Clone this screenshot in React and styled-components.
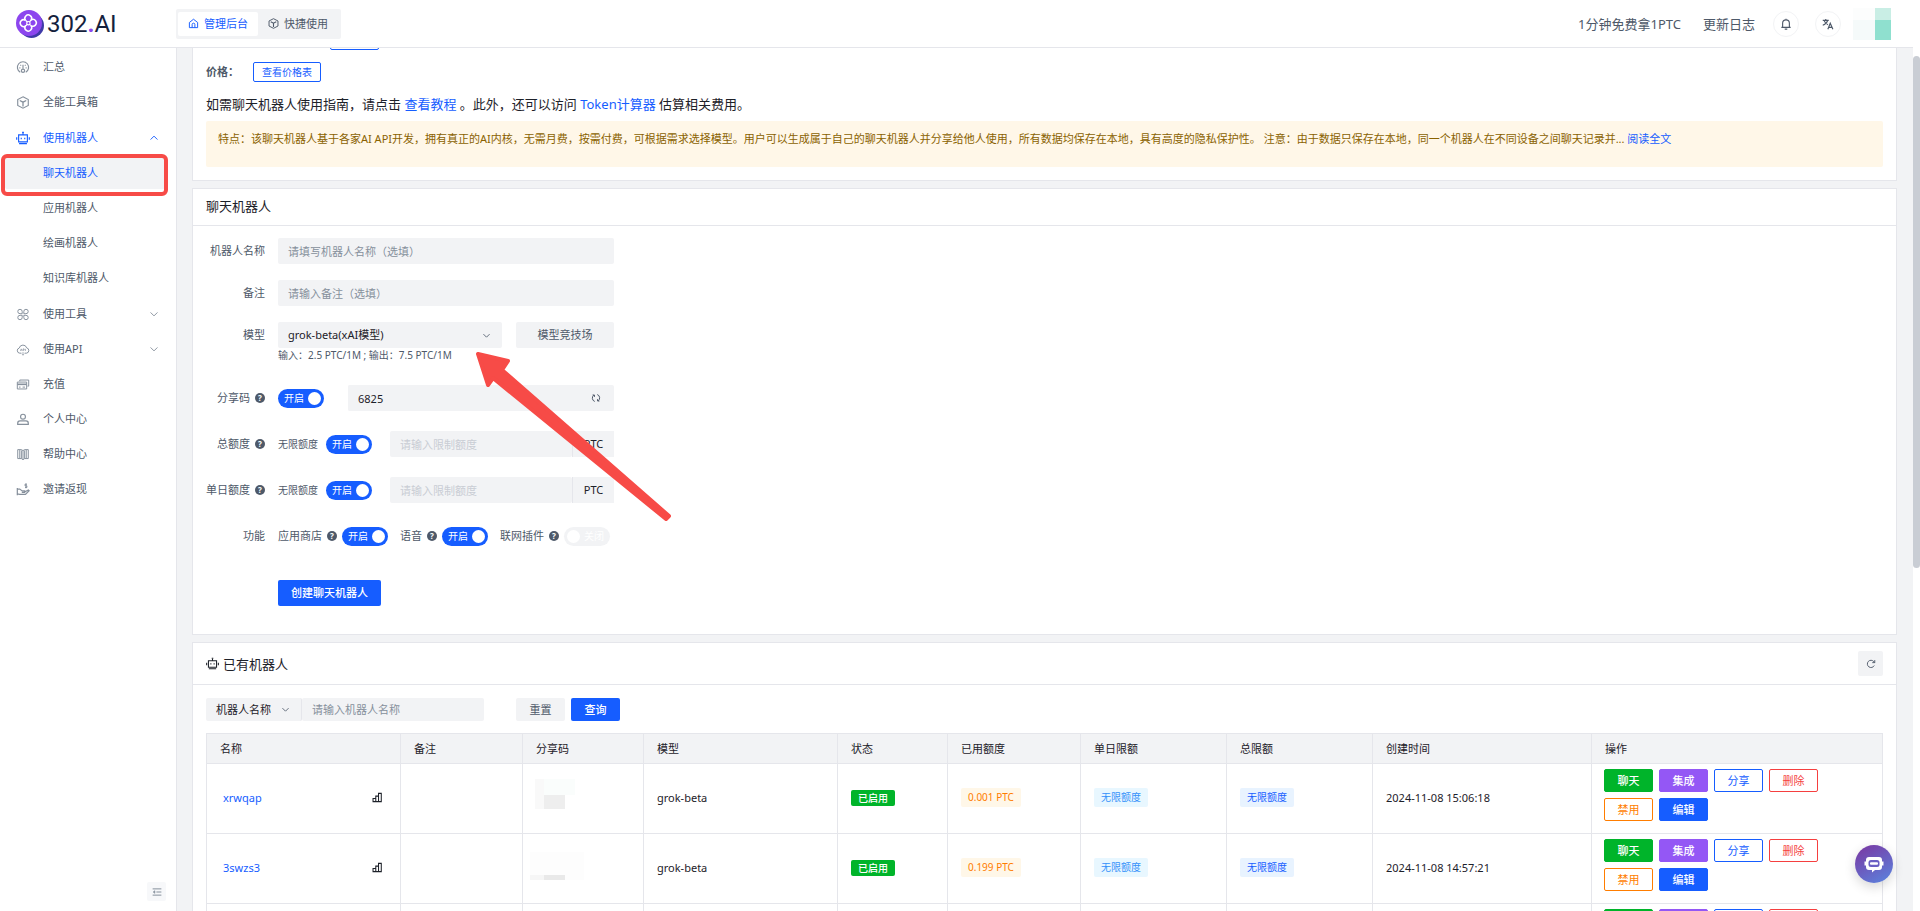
import { useState } from "react";
import styled, { createGlobalStyle } from "styled-components";

const menuTop = [
    { key: "summary", icon: "gauge", text: "汇总" },
    { key: "toolbox", icon: "cube", text: "全能工具箱" },
];

const robotMenu = ["聊天机器人", "应用机器人", "绘画机器人", "知识库机器人"];

const menuBottom = [
    { key: "tools", icon: "clover", text: "使用工具", arrow: true },
    { key: "api", icon: "cloud", text: "使用API", arrow: true },
    { key: "recharge", icon: "cards", text: "充值" },
    { key: "user", icon: "user", text: "个人中心" },
    { key: "help", icon: "book", text: "帮助中心" },
    { key: "invite", icon: "hand", text: "邀请返现" },
];

const columns = [
    { title: "名称", width: 194 },
    { title: "备注", width: 122 },
    { title: "分享码", width: 121 },
    { title: "模型", width: 194 },
    { title: "状态", width: 110 },
    { title: "已用额度", width: 133 },
    { title: "单日限额", width: 146 },
    { title: "总限额", width: 146 },
    { title: "创建时间", width: 219 },
    { title: "操作", width: 291 },
];

const robots = [
    { name: "xrwqap", mask: "a", model: "grok-beta", used: "0.001 PTC", time: "2024-11-08 15:06:18" },
    { name: "3swzs3", mask: "b", model: "grok-beta", used: "0.199 PTC", time: "2024-11-08 14:57:21" },
    { name: "", mask: "", model: "", used: "", time: "" },
];

const actions = [
    { text: "聊天", color: "#00b42a", fill: true },
    { text: "集成", color: "#9457f5", fill: true },
    { text: "分享", color: "#165dff" },
    { text: "删除", color: "#f53f3f" },
    { text: "禁用", color: "#ff7d00" },
    { text: "编辑", color: "#165dff", fill: true },
];

// 16x16 line icons
const paths = {
    gauge: (
        <>
            <path d="M4.6 13.8A6.9 6.9 0 1 1 11.4 13.8" strokeWidth="1.4" />
            <path d="M8 4.5v5M3.5 8.5h1.3M11.2 8.5h1.3M4.8 4.8l.9.9M11.2 4.8l-.9.9" strokeWidth="1.4" />
            <circle cx="8" cy="12" r="2" strokeWidth="1.5" />
        </>
    ),
    cube: (
        <>
            <path d="M8 1l6.5 3.3v7.4L8 15l-6.5-3.3V4.3z" strokeWidth="1.4" />
            <path d="M4 5.5l4 2.1 4-2.1M8 7.6V13" strokeWidth="1.6" />
        </>
    ),
    robot: (
        <>
            <path d="M3 4.5h10v8H3zM8 4.5V2M.8 7v3M15.2 7v3" strokeWidth="1.3" />
            <path d="M7 1.6h2M3.5 14.5h9M6 7.8v1.5M10 7.8v1.5" strokeWidth="1.3" />
        </>
    ),
    clover: (
        <>
            <path d="M7 7H4.4A2.7 2.7 0 1 1 7 4.4zM9 7V4.4A2.7 2.7 0 1 1 11.6 7z" />
            <path d="M7 9v2.6A2.7 2.7 0 1 1 4.4 9zM9 9h2.6A2.7 2.7 0 1 1 9 11.6z" />
        </>
    ),
    cloud: (
        <>
            <path d="M6 12.5H4A3.2 3.2 0 0 1 3.4 6.2 4.7 4.7 0 0 1 12.5 6 3.3 3.3 0 0 1 12.3 12.5H10" />
            <path d="M8 11v4M6.5 13.6L8 15l1.5-1.4M4.8 9.8l1-2.6 1 2.6M8 9.8V7.3h1.4v1.4H8M11 7.2v2.6" strokeWidth="0.8" />
        </>
    ),
    cards: (
        <>
            <path d="M4 4V2.5h11V10h-1.5" />
            <path d="M1 5h11.5v8.5H1zM3 11.2h2M7.5 11.2h3" />
            <path d="M1 7.8h11.5" strokeWidth="2" />
        </>
    ),
    user: (
        <>
            <circle cx="8" cy="4.6" r="3" strokeWidth="1.4" />
            <path d="M1.5 14v-1.4a2.8 2.8 0 0 1 2.8-2.8h7.4a2.8 2.8 0 0 1 2.8 2.8V14z" strokeWidth="1.5" />
        </>
    ),
    book: (
        <>
            <path d="M8 3.2L6 2H1.5v11H6l2 1.4 2-1.4h4.5V2H10z" />
            <path d="M4 2.5v10M6 3v10M8 3.2V14M10 3v10M12 2.5v10" />
        </>
    ),
    hand: (
        <>
            <path d="M1 6v9M1 7.5h3l3 2.2h3v1.8H6.5M10 11l4.5-2.5 1 1L11 14H4l-3-.5" strokeWidth="1.5" />
            <path d="M12.8 1.5H10.5v2h2.3v2h-2.3M11.7.5v6" />
        </>
    ),
    home: <path d="M2 6.5L8 1.8l6 4.7V14H2zM6 14V9.5a2 2 0 0 1 4 0V14" strokeWidth="1.4" />,
    down: <path d="M2.5 5.5L8 11l5.5-5.5" strokeWidth="1.5" />,
    up: <path d="M2.5 10.5L8 5l5.5 5.5" strokeWidth="1.5" />,
    bell: <path d="M1.8 12.5h12.4M3.5 12.5V7a4.5 4.5 0 0 1 9 0v5.5M8 2.5V1M6.3 14.8h3.4" strokeWidth="1.5" />,
    translate: (
        <>
            <path d="M1 3.2h8M5 1.2v2M2.8 3.5C4 6.5 5.8 8 8 9M7.5 3.5C6.5 6.5 4 8.7 1 9.7" strokeWidth="1.5" />
            <path d="M7.8 15l3.2-8 3.5 8M9 12.5h4.5" strokeWidth="1.6" />
        </>
    ),
    chart: <path d="M1.5 9.5h4V14h-4zM5.5 6h4v8h-4zM9.5 2h4v12h-4z" strokeWidth="1.5" />,
    refresh: <path d="M13.2 10.4A5.8 5.8 0 1 1 12.5 4.2L14 5.8M14 1.8v4h-4" strokeWidth="1.5" />,
    sync: <path d="M6 13.5A5.7 5.7 0 0 1 4.5 3.5M2.5 3.2h3v3M10 2.5a5.7 5.7 0 0 1 1.5 10M13.5 12.8h-3v-3" strokeWidth="1.6" />,
    fold: (
        <>
            <path d="M1 3h14M7 8h8M1 13h14" strokeWidth="1.6" />
            <path d="M4.5 6v4L2 8z" fill="currentColor" />
        </>
    ),
};

function Icon({ name, size = 13 }) {
    return (
        <IconSvg width={size} height={size} viewBox="0 0 16 16" aria-hidden="true">
            {paths[name]}
        </IconSvg>
    );
}

function Help() {
    return <HelpDot title="说明">?</HelpDot>;
}

function Switch({ label, on = true, disabled }) {
    const [checked, setChecked] = useState(on);
    return (
        <SwitchBox $on={checked}>
            <input
                type="checkbox"
                aria-label={label}
                checked={checked}
                disabled={disabled}
                onChange={(e) => setChecked(e.target.checked)}
            />
            <span>{checked ? "开启" : "关闭"}</span>
            <i />
        </SwitchBox>
    );
}

function Logo() {
    return (
        <LogoLink href="#">
            <svg width="28" height="28" viewBox="0 0 28 28" aria-hidden="true">
                <circle cx="15.5" cy="15.5" r="12.5" fill="#3f3aa8" />
                <circle cx="13" cy="13" r="13" fill="#8c46ee" />
                <g fill="none" stroke="#fff" strokeWidth="1.5">
                    <path d="M9.5 10.3A3.4 3.4 0 1 1 15.3 9.8A3.4 3.4 0 1 1 15 15.6A3.4 3.4 0 1 1 9.3 16.1A3.4 3.4 0 1 1 9.5 10.3Z" />
                    <path d="M9.5 10.3l2 1.8M15.3 9.8l-1.8 2M15 15.6l-1.5-1.2M9.3 16.1l2-1.7" strokeWidth="1.2" />
                    <circle cx="12.4" cy="13.2" r="1.7" strokeWidth="1.2" />
                </g>
            </svg>
            <span>302<b>.</b>AI</span>
        </LogoLink>
    );
}

function Sidebar() {
    const [active, setActive] = useState("聊天机器人");
    return (
        <Side>
            <nav>
                {menuTop.map((m) => (
                    <MenuItem href="#" key={m.key}>
                        <Icon name={m.icon} />
                        <span>{m.text}</span>
                    </MenuItem>
                ))}
                <MenuGroup>
                    <MenuItem href="#" $active>
                        <Icon name="robot" size={14} />
                        <span>使用机器人</span>
                        <Icon name="up" size={10} />
                    </MenuItem>
                    {robotMenu.map((text) => (
                        <SubItem href="#" key={text} $active={active === text} onClick={() => setActive(text)}>
                            {text}
                            {text === "聊天机器人" && <Marker />}
                        </SubItem>
                    ))}
                </MenuGroup>
                {menuBottom.map((m) => (
                    <MenuItem href="#" key={m.key}>
                        <Icon name={m.icon} />
                        <span>{m.text}</span>
                        {m.arrow && <Icon name="down" size={10} />}
                    </MenuItem>
                ))}
            </nav>
            <FoldBtn type="button" aria-label="收起菜单">
                <Icon name="fold" size={10} />
            </FoldBtn>
        </Side>
    );
}

function Intro() {
    return (
        <IntroCard>
            <IntroRow>
                <ClippedLink href="#" aria-label="教程" />
            </IntroRow>
            <IntroRow>
                <strong>价格：</strong>
                <OutlineLink href="#">查看价格表</OutlineLink>
            </IntroRow>
            <IntroText>
                如需聊天机器人使用指南，请点击 <a href="#">查看教程</a> 。此外，还可以访问 <a href="#">Token计算器</a> 估算相关费用。
            </IntroText>
            <Notice>
                特点：该聊天机器人基于各家AI API开发，拥有真正的AI内核，无需月费，按需付费，可根据需求选择模型。用户可以生成属于自己的聊天机器人并分享给他人使用，所有数据均保存在本地，具有高度的隐私保护性。 注意：由于数据只保存在本地，同一个机器人在不同设备之间聊天记录并... <a href="#">阅读全文</a>
            </Notice>
        </IntroCard>
    );
}

function QuotaRow({ id, label }) {
    return (
        <FormRow>
            <label htmlFor={id}>{label} <Help /></label>
            <Controls>
                <Small>无限额度</Small>
                <Switch label={label} />
                <Quota>
                    <Input id={id} placeholder="请输入限制额度" disabled />
                    <span>PTC</span>
                </Quota>
            </Controls>
        </FormRow>
    );
}

function CreateForm() {
    return (
        <Card>
            <CardHead>聊天机器人</CardHead>
            <Form onSubmit={(e) => e.preventDefault()}>
                <FormRow $gap={16}>
                    <label htmlFor="name">机器人名称</label>
                    <Input id="name" placeholder="请填写机器人名称（选填）" />
                </FormRow>
                <FormRow $gap={16}>
                    <label htmlFor="remark">备注</label>
                    <Input id="remark" placeholder="请输入备注（选填）" />
                </FormRow>
                <FormRow $gap={23}>
                    <label htmlFor="model">模型</label>
                    <div>
                        <ModelLine>
                            <SelectBox>
                                <select id="model">
                                    <option>grok-beta(xAI模型)</option>
                                </select>
                                <Icon name="down" size={9} />
                            </SelectBox>
                            <GreyBtn type="button">模型竞技场</GreyBtn>
                        </ModelLine>
                        <Hint>输入：2.5 PTC/1M ; 输出：7.5 PTC/1M</Hint>
                    </div>
                </FormRow>
                <FormRow>
                    <label htmlFor="code">分享码 <Help /></label>
                    <ShareLine>
                        <Switch label="分享码" />
                        <CodeBox>
                            <Input id="code" defaultValue="6825" />
                            <button type="button" aria-label="刷新分享码"><Icon name="sync" size={10} /></button>
                        </CodeBox>
                    </ShareLine>
                </FormRow>
                <QuotaRow id="total" label="总额度" />
                <QuotaRow id="daily" label="单日额度" />
                <FormRow $gap={31}>
                    <label>功能</label>
                    <Features>
                        <div>应用商店 <Help /><Switch label="应用商店" /></div>
                        <div>语音 <Help /><Switch label="语音" /></div>
                        <div>联网插件 <Help /><Switch label="联网插件" on={false} disabled /></div>
                    </Features>
                </FormRow>
                <FormRow $gap={0}>
                    <span />
                    <CreateBtn type="submit">创建聊天机器人</CreateBtn>
                </FormRow>
                <Arrow width="202" height="174" viewBox="0 0 202 174" aria-hidden="true">
                    <path d="M4 4L34 11L28 20L195 166L192 169L19 28L14 35Z" />
                </Arrow>
            </Form>
        </Card>
    );
}

function RobotList() {
    return (
        <ListCard>
            <ListHead>
                <Icon name="robot" />
                <span>已有机器人</span>
                <button type="button" aria-label="刷新"><Icon name="refresh" size={10} /></button>
            </ListHead>
            <ListBody>
                <Filter>
                    <SearchBox>
                        <FieldSelect>
                            <select aria-label="筛选字段">
                                <option>机器人名称</option>
                            </select>
                            <Icon name="down" size={9} />
                        </FieldSelect>
                        <Input aria-label="机器人名称" placeholder="请输入机器人名称" />
                    </SearchBox>
                    <FilterBtn type="button">重置</FilterBtn>
                    <FilterBtn type="button" $primary>查询</FilterBtn>
                </Filter>
                <Table>
                    <colgroup>
                        {columns.map((c) => <Col key={c.title} $w={c.width} />)}
                    </colgroup>
                    <thead>
                        <tr>{columns.map((c) => <th key={c.title}>{c.title}</th>)}</tr>
                    </thead>
                    <tbody>
                        {robots.map((r, i) => (
                            <tr key={i}>
                                <td>
                                    <NameCell>
                                        <a href="#">{r.name}</a>
                                        {r.name && <Icon name="chart" size={11} />}
                                    </NameCell>
                                </td>
                                <td />
                                <td>{r.mask && <Mask kind={r.mask} />}</td>
                                <td>{r.model}</td>
                                <td>{r.name && <Status>已启用</Status>}</td>
                                <td>{r.used && <Tag $bg="#fff7e8" $color="#ff7d00">{r.used}</Tag>}</td>
                                <td>{r.name && <Tag $bg="#e8f7ff" $color="#3491fa">无限额度</Tag>}</td>
                                <td>{r.name && <Tag $bg="#e8f3ff" $color="#165dff">无限额度</Tag>}</td>
                                <td>{r.time}</td>
                                <ActionCell>
                                    <Actions>
                                        {actions.map((a) => (
                                            <ActionBtn type="button" key={a.text} $color={a.color} $fill={a.fill}>{a.text}</ActionBtn>
                                        ))}
                                    </Actions>
                                </ActionCell>
                            </tr>
                        ))}
                    </tbody>
                </Table>
            </ListBody>
        </ListCard>
    );
}

// pixelated share codes
function Mask({ kind }) {
    if (kind === "a") {
        return (
            <MaskSvg width="40" height="30" aria-hidden="true">
                <rect width="9" height="30" fill="#f9f9f9" />
                <rect x="9" width="31" height="16" fill="#fafdfc" />
                <rect x="9" y="16" width="21" height="14" fill="#eeeeee" />
            </MaskSvg>
        );
    }
    return (
        <MaskSvg $wide width="54" height="28" aria-hidden="true">
            <rect width="54" height="28" fill="#fdfdfd" />
            <rect y="23" width="14" height="5" fill="#f6f6f6" />
            <rect x="14" y="23" width="21" height="5" fill="#e9e9e9" />
        </MaskSvg>
    );
}

export default function App() {
    return (
        <Page>
            <GlobalStyle />
            <Shell>
                <Header>
                    <Logo />
                    <Tabs>
                        <Tab type="button" $active><Icon name="home" size={11} />管理后台</Tab>
                        <Tab type="button"><Icon name="cube" size={11} />快捷使用</Tab>
                    </Tabs>
                    <HeaderRight>
                        <a href="#">1分钟免费拿1PTC</a>
                        <a href="#">更新日志</a>
                        <RoundBtn type="button" aria-label="通知"><Icon name="bell" size={12} /></RoundBtn>
                        <RoundBtn type="button" aria-label="切换语言"><Icon name="translate" size={12} /></RoundBtn>
                        <svg width="38" height="32" aria-hidden="true">
                            <rect width="22" height="12" fill="#fcfdfd" />
                            <rect y="12" width="22" height="20" fill="#f5fafa" />
                            <rect x="22" width="16" height="12" fill="#c9eee5" />
                            <rect x="22" y="12" width="16" height="20" fill="#8fe0cf" />
                        </svg>
                    </HeaderRight>
                </Header>
                <Body>
                    <Sidebar />
                    <Main>
                        <Intro />
                        <CreateForm />
                        <RobotList />
                    </Main>
                </Body>
            </Shell>
            <Rail><div /></Rail>
            <ChatBall type="button" aria-label="在线客服">
                <svg width="20" height="20" viewBox="0 0 20 20" aria-hidden="true">
                    <path d="M5 3h10a3 3 0 0 1 3 3v1.5h1.5v4H18V13a3 3 0 0 1-3 3h-4l-3 2.5V16H5a3 3 0 0 1-3-3v-1.5H.5v-4H2V6a3 3 0 0 1 3-3z" fill="#fff" />
                    <rect x="4.5" y="6" width="11" height="7" rx="2.5" fill="#6a5fc4" />
                    <rect x="6" y="8.2" width="8" height="2.6" rx="1" fill="#fff" />
                </svg>
            </ChatBall>
        </Page>
    );
}

const GlobalStyle = createGlobalStyle`
* {
    box-sizing: border-box;
}
body {
    margin: 0;
    background: #fff;
}
body, button, input, select {
    font-family: "Noto Sans", "Noto Sans CJK SC", sans-serif;
    font-size: 11px;
    line-height: 16px;
    color: #1d2129;
}
button, input, select {
    border: none;
    outline: none;
    padding: 0;
    margin: 0;
    border-radius: 2px;
    background: transparent;
}
button {
    cursor: pointer;
}
a {
    color: #165dff;
    text-decoration: none;
}
`;

const IconSvg = styled.svg`
    fill: none;
    stroke: currentColor;
    stroke-width: 1.2;
    flex-shrink: 0;
`;

const Page = styled.div`
    display: flex;
    height: 100vh;
    overflow: hidden;
`;

const Shell = styled.div`
    flex: 1;
    min-width: 0;
    display: flex;
    flex-direction: column;
`;

const Rail = styled.div`
    width: 7px;
    padding-top: 56px;

    div {
        height: 60%;
        max-height: 512px;
        border-radius: 4px;
        background: #c9cdd4;
    }
`;

const Header = styled.header`
    display: flex;
    align-items: center;
    height: 48px;
    flex-shrink: 0;
    padding: 0 22px 0 16px;
    border-bottom: 1px solid #e5e6eb;
`;

const LogoLink = styled.a`
    display: flex;
    align-items: center;
    gap: 3px;
    width: 160px;
    color: #14213d;
    font-family: Roboto, sans-serif;
    font-size: 24px;
    line-height: 28px;

    b {
        color: #8c46ee;
    }
`;

const Tabs = styled.div`
    display: flex;
    padding: 3px 3px 3px 2px;
    border-radius: 2px;
    background: #f2f3f5;
`;

const Tab = styled.button`
    display: flex;
    align-items: center;
    gap: 5px;
    height: 24px;
    padding: 0 10px;
    color: ${(p) => (p.$active ? "#165dff" : "#4e5969")};
    background: ${(p) => (p.$active ? "#fff" : "transparent")};
`;

const HeaderRight = styled.div`
    display: flex;
    align-items: center;
    margin-left: auto;

    a {
        margin-right: 22px;
        font-size: 13px;
        line-height: 20px;
        color: #4e5969;
    }
    a + button {
        margin-left: -4px;
    }
`;

const RoundBtn = styled.button`
    display: flex;
    align-items: center;
    justify-content: center;
    width: 26px;
    height: 26px;
    margin-right: 16px;
    border: 1px solid #f2f3f5;
    border-radius: 50%;
    color: #4e5969;

    & + & {
        margin-right: 12px;
    }
`;

const Body = styled.div`
    display: flex;
    flex: 1;
    min-height: 0;
`;

const Side = styled.aside`
    display: flex;
    flex-direction: column;
    justify-content: space-between;
    width: 177px;
    flex-shrink: 0;
    padding: 3px 8px 10px 5px;
    border-right: 1px solid #e5e6eb;
`;

const MenuItem = styled.a`
    display: flex;
    align-items: center;
    height: 32px;
    margin-bottom: 3px;
    padding: 0 9px 0 11px;
    color: ${(p) => (p.$active ? "#165dff" : "#4e5969")};

    svg {
        width: 14px;
        color: ${(p) => (p.$active ? "#165dff" : "#86909c")};
    }
    svg + span {
        flex: 1;
        margin-left: 13px;
    }
    span + svg {
        width: 10px;
    }
`;

const MenuGroup = styled.div`
    padding: 1px 0;
`;

const SubItem = styled.a`
    display: flex;
    align-items: center;
    position: relative;
    height: 32px;
    margin-bottom: 3px;
    padding-left: 38px;
    border-radius: 2px;
    color: ${(p) => (p.$active ? "#165dff" : "#4e5969")};
    background: ${(p) => (p.$active ? "#f2f3f5" : "transparent")};
`;

const Marker = styled.i`
    position: absolute;
    inset: -3px 0 -7px -4px;
    border: 4px solid #f74b47;
    border-radius: 6px;
    pointer-events: none;
`;

const FoldBtn = styled.button`
    display: flex;
    align-items: center;
    justify-content: center;
    align-self: flex-end;
    width: 19px;
    height: 19px;
    margin-right: 2px;
    background: #f7f8fa;
    color: #86909c;
`;

const Main = styled.main`
    flex: 1;
    min-width: 0;
    display: flex;
    flex-direction: column;
    gap: 7px;
    padding: 0 16px 0 15px;
    overflow: hidden;
    background: #f2f3f5;
`;

const Card = styled.section`
    flex-shrink: 0;
    border: 1px solid #e5e6eb;
    background: #fff;
`;

const IntroCard = styled(Card)`
    /* scrolled a little under the header */
    margin-top: -30px;
    padding: 11px 13px 13px;
`;

const IntroRow = styled.div`
    display: flex;
    align-items: center;
    height: 20px;
    margin-bottom: 12px;

    strong {
        width: 47px;
        color: #4e5969;
    }
`;

const OutlineLink = styled.a`
    height: 20px;
    padding: 0 8px;
    border: 1px solid #165dff;
    border-radius: 2px;
    font-size: 10px;
    line-height: 18px;
`;

const ClippedLink = styled(OutlineLink)`
    width: 49px;
    margin-left: 124px;
`;

const IntroText = styled.p`
    margin: 0 0 7px;
    font-size: 13px;
    line-height: 20px;
`;

const Notice = styled.div`
    min-height: 46px;
    padding: 10px 12px;
    border-radius: 2px;
    background: #fff7e8;
    color: #8a6200;
`;

const CardHead = styled.h2`
    margin: 0;
    padding: 7px 13px 9px;
    border-bottom: 1px solid #e5e6eb;
    font-size: 13px;
    font-weight: 400;
    line-height: 20px;
`;

const Form = styled.form`
    position: relative;
    padding: 12px 13px 28px;
`;

const FormRow = styled.div`
    display: grid;
    grid-template-columns: 59px 336px;
    column-gap: 13px;
    margin-bottom: ${(p) => p.$gap ?? 20}px;

    > label {
        display: flex;
        align-items: center;
        justify-content: flex-end;
        gap: 5px;
        height: 26px;
        color: #4e5969;
        white-space: nowrap;
    }
`;

const Input = styled.input`
    width: 100%;
    min-width: 0;
    height: 26px;
    padding: 0 10px;
    background: #f2f3f5;

    &::placeholder {
        color: #86909c;
        opacity: 1;
    }
    &:disabled::placeholder {
        color: #c9cdd4;
    }
`;

const ModelLine = styled.div`
    display: flex;
    gap: 14px;
`;

const SelectBox = styled.div`
    display: flex;
    align-items: center;
    flex: 1;
    height: 26px;
    padding: 0 11px 0 10px;
    border-radius: 2px;
    background: #f2f3f5;
    color: #4e5969;

    select {
        flex: 1;
        min-width: 0;
        appearance: none;
    }
`;

const GreyBtn = styled.button`
    width: 98px;
    height: 26px;
    background: #f2f3f5;
    color: #4e5969;
`;

const Hint = styled.div`
    font-size: 10px;
    line-height: 14px;
    color: #4e5969;
`;

const Controls = styled.div`
    display: flex;
    align-items: center;
    gap: 8px;
    height: 26px;
`;

const ShareLine = styled(Controls)`
    gap: 24px;
`;

const Small = styled.span`
    font-size: 10px;
    color: #4e5969;
`;

const SwitchBox = styled.label`
    display: flex;
    align-items: center;
    justify-content: space-between;
    flex-direction: ${(p) => (p.$on ? "row" : "row-reverse")};
    width: 46px;
    height: 19px;
    flex-shrink: 0;
    padding: ${(p) => (p.$on ? "0 3px 0 6px" : "0 6px 0 3px")};
    border-radius: 10px;
    background: ${(p) => (p.$on ? "#165dff" : "#f2f3f5")};
    color: #fff;
    font-size: 10px;

    input {
        position: absolute;
        width: 1px;
        height: 1px;
        opacity: 0;
    }
    i {
        width: 13px;
        height: 13px;
        border-radius: 50%;
        background: #fff;
    }
`;

const CodeBox = styled.div`
    display: flex;
    flex: 1;
    padding-right: 13px;
    border-radius: 2px;
    background: #f2f3f5;

    button {
        display: flex;
        align-items: center;
        color: #4e5969;
    }
`;

const Quota = styled.div`
    display: flex;
    flex: 1;
    min-width: 0;
    margin-left: 10px;

    span {
        width: 42px;
        flex-shrink: 0;
        border-left: 1px solid #e5e6eb;
        background: #f2f3f5;
        line-height: 26px;
        text-align: center;
    }
`;

const HelpDot = styled.span`
    display: inline-flex;
    align-items: center;
    justify-content: center;
    width: 10px;
    height: 10px;
    border-radius: 50%;
    background: #4e5969;
    color: #fff;
    font-size: 8px;
    font-weight: 700;
    line-height: 10px;
`;

const Features = styled.div`
    display: flex;
    gap: 12px;
    height: 26px;

    > div {
        display: flex;
        align-items: center;
        gap: 5px;
        color: #4e5969;
        white-space: nowrap;
    }
`;

const CreateBtn = styled.button`
    justify-self: start;
    height: 26px;
    padding: 0 13px;
    background: #165dff;
    color: #fff;
    font-weight: 500;
`;

const Arrow = styled.svg`
    position: absolute;
    left: 281px;
    top: 124px;
    pointer-events: none;

    path {
        fill: #f74b47;
        stroke: #f74b47;
        stroke-width: 4;
        stroke-linejoin: round;
    }
`;

const ListCard = styled(Card)`
    flex: 1 0 auto;
`;

const ListHead = styled(CardHead)`
    display: flex;
    align-items: center;
    gap: 4px;
    padding: 8px 13px;

    button {
        display: flex;
        align-items: center;
        justify-content: center;
        width: 25px;
        height: 25px;
        margin-left: auto;
        background: #f2f3f5;
        color: #4e5969;
    }
`;

const ListBody = styled.div`
    padding: 13px;
`;

const Filter = styled.div`
    display: flex;
    gap: 6px;
    margin-bottom: 12px;
`;

const SearchBox = styled.div`
    display: flex;
    width: 278px;
    margin-right: 26px;

    input {
        height: 23px;
    }
`;

const FieldSelect = styled(SelectBox)`
    flex: 0 0 96px;
    height: 23px;
    border-right: 1px solid #e5e6eb;
`;

const FilterBtn = styled.button`
    width: 49px;
    height: 23px;
    background: ${(p) => (p.$primary ? "#165dff" : "#f2f3f5")};
    color: ${(p) => (p.$primary ? "#fff" : "#4e5969")};
    font-weight: ${(p) => (p.$primary ? 500 : 400)};
`;

const Table = styled.table`
    width: 100%;
    table-layout: fixed;
    border-collapse: collapse;

    th, td {
        border: 1px solid #e5e6eb;
        padding: 0 13px;
        text-align: left;
        vertical-align: middle;
        font-weight: 400;
    }
    th {
        height: 30px;
        background: #f2f3f5;
    }
    td {
        height: 70px;
        padding-bottom: 2px;
    }
`;

const Col = styled.col`
    width: ${(p) => p.$w}px;
`;

const NameCell = styled.div`
    display: flex;
    align-items: center;
    justify-content: space-between;
    padding: 0 4px 0 3px;
`;

const MaskSvg = styled.svg`
    display: block;
    margin: ${(p) => (p.$wide ? "0 0 4px -6px" : "0 0 8px -1px")};
`;

const Status = styled.span`
    display: inline-block;
    padding: 0 7px;
    border-radius: 2px;
    background: #00b42a;
    color: #fff;
    font-size: 10px;
    font-weight: 500;
`;

const Tag = styled.span`
    display: inline-block;
    padding: 0 7px;
    border-radius: 2px;
    background: ${(p) => p.$bg};
    color: ${(p) => p.$color};
    font-size: 10px;
    line-height: 19px;
    white-space: nowrap;
`;

const ActionCell = styled.td`
    && {
        vertical-align: top;
        padding: 0 12px;
    }
`;

const Actions = styled.div`
    display: flex;
    flex-wrap: wrap;
    gap: 6px;
    padding-top: 5px;
`;

const ActionBtn = styled.button`
    width: 49px;
    height: 23px;
    border: 1px solid ${(p) => p.$color};
    background: ${(p) => (p.$fill ? p.$color : "#fff")};
    color: ${(p) => (p.$fill ? "#fff" : p.$color)};
    font-weight: ${(p) => (p.$fill ? 500 : 400)};
`;

const ChatBall = styled.button`
    position: fixed;
    right: 27px;
    bottom: 28px;
    display: flex;
    align-items: center;
    justify-content: center;
    width: 38px;
    height: 38px;
    border-radius: 50%;
    background: linear-gradient(150deg, #7b35a0, #5a86e0);
    box-shadow: 0 4px 12px rgba(0, 0, 0, 0.16);
`;
